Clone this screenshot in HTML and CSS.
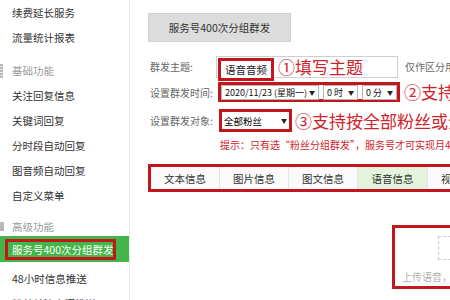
FILE: index.html
```html
<!DOCTYPE html>
<html lang="zh">
<head>
<meta charset="utf-8">
<link rel="stylesheet" href="styles.css">
</head>
<body>
<div class="page">
  <aside class="sidebar">
    <div class="item">续费延长服务</div>
    <div class="item">流量统计报表</div>
    <div class="head"><span class="hicon"></span>基础功能</div>
    <div class="item">关注回复信息</div>
    <div class="item">关键词回复</div>
    <div class="item">分时段自动回复</div>
    <div class="item">图音频自动回复</div>
    <div class="item">自定义菜单</div>
    <div class="head head2"><span class="hicon small"></span>高级功能</div>
    <div class="item active"><span class="active-mark">服务号400次分组群发</span></div>
    <div class="item">48小时信息推送</div>
    <div class="item">粉丝关注来源推送</div>
  </aside>
  <main class="main">
    <div class="title-btn">服务号400次分组群发</div>

    <div class="row r1">
      <span class="label">群发主题:</span>
      <div class="input">
        <span class="mark">语音音频</span>
        <span class="note">①填写主题</span>
      </div>
      <span class="aside">仅作区分用途</span>
    </div>

    <div class="row r2">
      <span class="label">设置群发时间:</span>
      <div class="redbox selects">
        <span class="sel s1">2020/11/23 (星期一)<i>▼</i></span>
        <span class="sel s2">0 时<i>▼</i></span>
        <span class="sel s2">0 分<i>▼</i></span>
      </div>
      <span class="note">②支持定时群发</span>
    </div>

    <div class="row r3">
      <span class="label">设置群发对象:</span>
      <div class="redbox target">
        <span class="sel s3">全部粉丝<i>▼</i></span>
      </div>
      <span class="note">③支持按全部粉丝或分组群发</span>
    </div>

    <div class="tip">提示：只有选“粉丝分组群发”，服务号才可实现月400次群发</div>

    <div class="tabs">
      <span class="tab">文本信息</span>
      <span class="tab">图片信息</span>
      <span class="tab">图文信息</span>
      <span class="tab on">语音信息</span>
      <span class="tab">视频信息</span>
    </div>

    <div class="upload">
      <span class="dash"></span>
      <span class="up-text">上传语音，格式支持mp3</span>
    </div>
  </main>
</div>
</body>
</html>
```

FILE: styles.css
```css
* { box-sizing: border-box; }
html, body {
  margin: 0;
  padding: 0;
  width: 450px;
  height: 300px;
  overflow: hidden;
  background: #fff;
  font-family: "Noto Sans CJK SC", "Microsoft YaHei", sans-serif;
}
.page {
  display: flex;
  height: 300px;
  overflow: hidden;
  white-space: nowrap;
}
.sidebar {
  width: 130px;
  flex: none;
  border-right: 1px solid #e6eaea;
  display: flex;
  flex-direction: column;
  font-size: 10.5px;
  color: #333;
  overflow: hidden;
}
.item {
  height: 25px;
  line-height: 25px;
  padding-left: 12px;
  flex: none;
}
.head {
  height: 25px;
  margin-top: 8px;
  display: flex;
  align-items: center;
  color: #9a9a9a;
  flex: none;
}
.head2 { height: 20px; }
.hicon {
  width: 3px;
  height: 14px;
  margin-right: 9px;
  background: repeating-linear-gradient(#b8b8b8 0 2px, #e2e2e2 2px 3px);
}
.hicon.small { height: 9px; width: 4px; margin-right: 8px; background: #b8b8b8; }
.item.active {
  height: 26px;
  margin-bottom: 4px;
  background: #44b549;
  color: #fff;
  padding-left: 5px;
  display: flex;
  align-items: center;
}
.active-mark {
  display: block;
  height: 21px;
  line-height: 15px;
  width: 111px;
  border: 3px solid #c3161c;
  padding-left: 4px;
}
.main {
  flex: 1;
  padding: 13px 0 0 18px;
  min-width: 0;
  font-size: 10px;
  color: #666;
  overflow: hidden;
}
.title-btn {
  width: 143px;
  height: 29px;
  background: #dcdcdc;
  border: 1px solid #d2d2d2;
  color: #333;
  font-size: 10.5px;
  display: flex;
  align-items: center;
  justify-content: center;
}
.row {
  display: flex;
  align-items: center;
}
.row > * { flex: none; }
.label {
  width: 70px;
  padding-left: 2px;
  color: #666;
}
.r1 { margin-top: 13px; height: 23px; }
.input {
  width: 182px;
  height: 22px;
  border: 1px solid #cfcfcf;
  display: flex;
  align-items: flex-start;
  margin-left: -2px;
}
.mark {
  margin: 1px 0 0 1px;
  height: 23px;
  padding: 0 4px;
  border: 3px solid #c3161c;
  font-size: 10.5px;
  line-height: 17px;
  color: #222;
  background: #fff;
}
.note {
  color: #d0222a;
  font-size: 17px;
  line-height: 20px;
  margin-left: 4px;
}
.aside {
  margin-left: 7px;
  color: #666;
  font-size: 10px;
}
.r2 { margin-top: 4px; height: 20px; }
.redbox {
  border: 3px solid #c3161c;
  display: flex;
  align-items: center;
}
.selects {
  height: 20px;
  gap: 4px;
}
.sel {
  height: 15px;
  border: 1px solid #b5b5b5;
  background: #fff;
  color: #111;
  font-size: 9px;
  display: flex;
  align-items: center;
  justify-content: space-between;
  padding: 0 3px 0 3px;
  flex: none;
}
.sel i { font-style: normal; font-size: 6px; color: #222; }
.s1 { width: 98px; }
.s2 { width: 35px; }
.r3 { margin-top: 7px; height: 23px; }
.target { width: 73px; height: 23px; margin-left: 1px; }
.s3 { border: none; width: 67px; font-size: 9.5px; color: #000; padding: 0 2px; }
.r3 .note { margin-left: 3px; }
.tip {
  margin: 6px 0 0 72px;
  color: #d0222a;
  font-size: 10px;
  line-height: 14px;
}
.tabs {
  margin-top: 12px;
  border: 3px solid #c3161c;
  height: 28px;
  width: 330px;
  display: flex;
  background: #fff;
}
.tab {
  width: 69px;
  flex: none;
  border-right: 1px solid #e4e4e4;
  background: #fafafa;
  color: #333;
  font-size: 10.5px;
  display: flex;
  align-items: center;
  justify-content: center;
}
.tab.on { background: #e4f4dc; width: 70px; }
.upload {
  margin: 33px 0 0 244px;
  width: 120px;
  height: 64px;
  border: 3px solid #c3161c;
  position: relative;
}
.dash {
  position: absolute;
  left: 43px;
  top: 8px;
  width: 30px;
  height: 24px;
  border: 1px dashed #c9c9c9;
}
.up-text {
  position: absolute;
  left: 7px;
  top: 41px;
  font-size: 10px;
  color: #b0b0b0;
}
```
